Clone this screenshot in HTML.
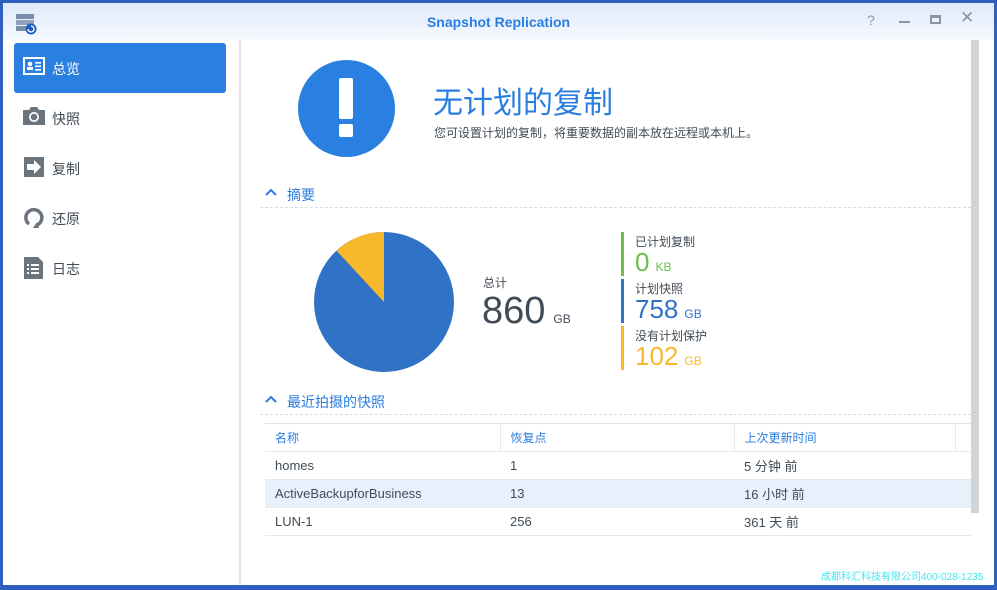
<!DOCTYPE html>
<html><head><meta charset="utf-8"><style>
*{margin:0;padding:0;box-sizing:border-box}
body{width:997px;height:590px;overflow:hidden;background:#2f5fbf;font-family:"Liberation Sans","Noto Sans CJK SC",sans-serif;position:relative}
.win{position:absolute;left:3px;top:3px;width:991px;height:582px;background:#fff}
.title{position:absolute;left:0;top:0;width:991px;height:37px;background:linear-gradient(#dfeafa,#f6f9fe)}
.title .t{position:absolute;left:0;right:0;top:11px;text-align:center;color:#2a7de1;font-weight:bold;font-size:14px}
.side{position:absolute;left:0;top:37px;width:238px;height:545px;background:#fff;border-right:2px solid #e3e6ea}
.nav{position:absolute;left:11px;width:212px;height:50px;font-size:14px;color:#414b55}
.nav span{position:absolute;left:38px;top:16px}
.nav svg{position:absolute;left:9px;top:14px}
.nav.sel{background:#2a80e0;color:#fff;border-radius:3px}
.abs{position:absolute}
.sec{position:absolute;left:260px;width:716px;border-bottom:1px dashed #d6dde6;height:30px;color:#2a7de1;font-size:14px}
.sec span{position:absolute;left:27px;top:7px}
.sec svg{position:absolute;left:5px;top:10px}
.bar{position:absolute;left:621px;width:3px}
.lbl{position:absolute;left:635px;font-size:12px;color:#414b55}
.num{position:absolute;left:635px;font-size:26px}
.num small{font-size:12px;margin-left:6px}
table{position:absolute;left:265px;top:423px;width:706px;border-collapse:collapse;font-size:13px;color:#414b55}
td,th{height:28px;padding-left:10px;text-align:left;font-weight:normal;border-bottom:1px solid #e6e9ee}
th{color:#2a7de1;font-size:12px;border-top:1px solid #dfe3e8;border-right:1px solid #e6e9ee}
</style></head><body>
<div class="win">
<div class="title"><div class="t">Snapshot Replication</div>
<svg class="abs" style="left:12px;top:9px" width="24" height="24" viewBox="0 0 24 24"><rect x="1" y="2" width="18" height="5" fill="#7a8ea8"/><rect x="1" y="8" width="18" height="5" fill="#8fa3bb"/><rect x="1" y="14" width="18" height="5" fill="#7a8ea8"/><circle cx="16" cy="17" r="5.5" fill="#1f5fbf"/><path d="M13 17a3 3 0 1 0 3-3" stroke="#fff" stroke-width="1.3" fill="none"/></svg>
<div class="abs" style="left:864px;top:9px;font-size:14px;color:#8a96a3">?</div>
<div class="abs" style="left:896px;top:18px;width:11px;height:2px;background:#8a96a3"></div>
<div class="abs" style="left:927px;top:12px;width:11px;height:9px;border:2px solid #8a96a3;border-top-width:3px"></div>
<div class="abs" style="left:957px;top:5px;font-size:17px;color:#8a96a3">✕</div>
</div>
<div class="side">
<div class="nav sel" style="top:3px"><svg width="22" height="18"><rect x="0" y="0" width="22" height="18" fill="#fff"/><rect x="2" y="2" width="18" height="14" fill="#2a80e0"/><circle cx="7" cy="7" r="2.3" fill="#fff"/><rect x="4" y="10" width="6" height="3" fill="#fff"/><rect x="12" y="5" width="6" height="1.6" fill="#fff"/><rect x="12" y="8.5" width="6" height="1.6" fill="#fff"/><rect x="12" y="12" width="6" height="1.6" fill="#fff"/></svg><span>总览</span></div>
<div class="nav" style="top:53px"><svg width="22" height="18"><path d="M0 3h6l2-3h6l2 3h6v15H0z" fill="#6b737c"/><circle cx="11" cy="10" r="5" fill="#fff"/><circle cx="11" cy="10" r="3.3" fill="#6b737c"/></svg><span>快照</span></div>
<div class="nav" style="top:103px"><svg width="22" height="20"><rect x="1" y="0" width="20" height="20" fill="#6b737c"/><path d="M4 7h7V3l7 7-7 7v-4H4z" fill="#fff"/></svg><span>复制</span></div>
<div class="nav" style="top:153px"><svg width="22" height="22"><path d="M6 17A8 8 0 1 1 14 18" stroke="#6b737c" stroke-width="3.5" fill="none"/><path d="M10 21l4-6 2 6z" fill="#6b737c"/></svg><span>还原</span></div>
<div class="nav" style="top:203px"><svg width="22" height="22"><path d="M1 0h14l5 5v17H1z" fill="#6b737c"/><g fill="#fff"><rect x="4" y="7" width="2" height="2"/><rect x="8" y="7" width="8" height="2"/><rect x="4" y="11" width="2" height="2"/><rect x="8" y="11" width="8" height="2"/><rect x="4" y="15" width="2" height="2"/><rect x="8" y="15" width="8" height="2"/></g></svg><span>日志</span></div>
</div>
</div>
<div class="abs" style="left:971px;top:40px;width:8px;height:473px;background:#d0d3d7"></div>
<svg class="abs" style="left:298px;top:60px" width="97" height="97"><circle cx="48.5" cy="48.5" r="48.5" fill="#2a80e0"/><rect x="41" y="18" width="14" height="41" rx="2" fill="#fff"/><rect x="41" y="64" width="14" height="13" rx="2" fill="#fff"/></svg>
<div class="abs" style="left:433px;top:78px;font-size:30px;color:#2a7de1">无计划的复制</div>
<div class="abs" style="left:434px;top:124px;font-size:12px;color:#414b55">您可设置计划的复制，将重要数据的副本放在远程或本机上。</div>
<div class="sec" style="top:178px"><svg width="12" height="8"><path d="M1 7l5-5 5 5" stroke="#2a7de1" stroke-width="2" fill="none"/></svg><span>摘要</span></div>
<svg class="abs" style="left:314px;top:232px" width="140" height="140"><circle cx="70" cy="70" r="70" fill="#3073c6"/><path d="M70 70L70 0A70 70 0 0 0 22.5 18.6z" fill="#f8b82b"/></svg>
<div class="abs" style="left:483px;top:274px;font-size:12px;color:#414b55">总计</div>
<div class="abs" style="left:482px;top:290px;font-size:38px;color:#414b55">860<small style="font-size:12px;margin-left:8px">GB</small></div>
<div class="bar" style="top:232px;height:44px;background:#6ac04a"></div>
<div class="lbl" style="top:233px">已计划复制</div>
<div class="num" style="top:247px;color:#6ac04a">0<small>KB</small></div>
<div class="bar" style="top:279px;height:44px;background:#3073c6"></div>
<div class="lbl" style="top:280px">计划快照</div>
<div class="num" style="top:294px;color:#3073c6">758<small>GB</small></div>
<div class="bar" style="top:326px;height:44px;background:#f8b82b"></div>
<div class="lbl" style="top:327px">没有计划保护</div>
<div class="num" style="top:341px;color:#f8b82b">102<small>GB</small></div>
<div class="sec" style="top:385px"><svg width="12" height="8"><path d="M1 7l5-5 5 5" stroke="#2a7de1" stroke-width="2" fill="none"/></svg><span>最近拍摄的快照</span></div>
<table>
<tr><th style="width:235px">名称</th><th style="width:234px">恢复点</th><th style="width:221px">上次更新时间</th><th style="border-right:none"></th></tr>
<tr><td>homes</td><td>1</td><td colspan="2">5 分钟 前</td></tr>
<tr style="background:#e6f1fc"><td>ActiveBackupforBusiness</td><td>13</td><td colspan="2">16 小时 前</td></tr>
<tr><td>LUN-1</td><td>256</td><td colspan="2">361 天 前</td></tr>
</table>
<div class="abs" style="left:821px;top:568px;font-size:10px;color:#3ee8f0">成都科汇科技有限公司400-028-1235</div>
</body></html>
